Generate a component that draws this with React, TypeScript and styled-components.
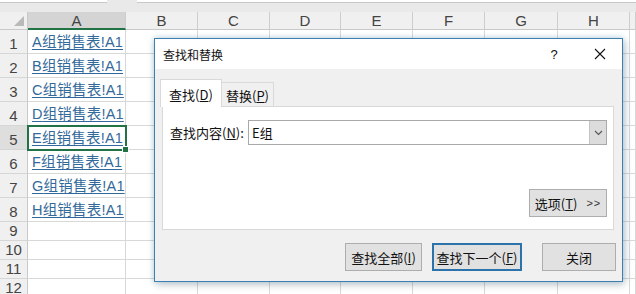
import styled, { createGlobalStyle, css } from 'styled-components';

const GlobalStyle = createGlobalStyle`
  html, body {
    margin: 0;
    padding: 0;
    background: #ffffff;
    overflow: hidden;
  }
  body {
    font-family: "Liberation Sans", "Noto Sans CJK SC", sans-serif;
  }
`;

const colWidths = [28, 98, 72, 72, 71, 72, 72, 73, 72];
const colNames = ['A', 'B', 'C', 'D', 'E', 'F', 'G', 'H'];
const links = ['A', 'B', 'C', 'D', 'E', 'F', 'G', 'H'];
const rowHeights = [24, 24, 24, 24, 24, 24, 24, 24, 19, 19, 19, 19];
const SELECTED_ROW = 5;

const Page = styled.div`
  position: relative;
  width: 636px;
  height: 294px;
  overflow: hidden;
  background: #fff;
`;

const TopStrip = styled.div`
  height: 12px;
  background: #e9e9e9;
  display: flex;
  align-items: flex-start;
  gap: 30px;
`;

const StripBox = styled.div<{ $w: string }>`
  width: ${(p) => p.$w};
  height: 2px;
  background: #fff;
  border-bottom: 1px solid #c8c8c8;
`;

const Grid = styled.div`
  display: grid;
  grid-template-columns: ${colWidths.map((w) => `${w}px`).join(' ')} 1fr;
  grid-template-rows: 18px ${rowHeights.map((h) => `${h}px`).join(' ')};
`;

const Corner = styled.div`
  background: #f0f0f0;
  border-right: 1px solid #c9c9c9;
  border-bottom: 1px solid #c9c9c9;
  box-sizing: border-box;
  display: flex;
  align-items: flex-end;
  justify-content: flex-end;
  padding: 0 3px 3px 0;
`;

const SelectAll = styled.div`
  width: 0;
  height: 0;
  border-left: 10px solid transparent;
  border-bottom: 10px solid #b9b9b9;
`;

const ColHeader = styled.div<{ $active?: boolean }>`
  box-sizing: border-box;
  background: ${(p) => (p.$active ? '#d4d4d4' : '#f0f0f0')};
  border-right: 1px solid #cdcdcd;
  border-bottom: ${(p) => (p.$active ? '2px solid #217346' : '1px solid #c9c9c9')};
  color: #444;
  font-size: 15px;
  display: flex;
  align-items: center;
  justify-content: center;
  line-height: 1;
`;

const RowHeader = styled.div<{ $active?: boolean }>`
  box-sizing: border-box;
  background: ${(p) => (p.$active ? '#dedede' : '#f0f0f0')};
  border-right: 1px solid #c9c9c9;
  border-bottom: 1px solid #d6d6d6;
  color: #444;
  font-size: 15px;
  display: flex;
  align-items: flex-end;
  justify-content: center;
  padding-bottom: 2px;
  line-height: 1;
`;

const Cell = styled.div<{ $selected?: boolean }>`
  position: relative;
  box-sizing: border-box;
  border-right: 1px solid #d8d8d8;
  border-bottom: 1px solid #d8d8d8;
  display: flex;
  align-items: flex-end;
  padding: 0 0 4px 4px;
  ${(p) =>
    p.$selected &&
    css`
      outline: 2px solid #217346;
      outline-offset: -1px;
      z-index: 1;
    `}
`;

const FillHandle = styled.span`
  position: absolute;
  right: -4px;
  bottom: -4px;
  width: 5px;
  height: 5px;
  background: #217346;
  border: 1px solid #fff;
`;

const Link = styled.span`
  color: #33699a;
  text-decoration: underline;
  text-underline-offset: 2px;
  font-size: 14.5px;
  line-height: 1;
  white-space: nowrap;
  letter-spacing: 0.2px;
`;

// ---- dialog ----

const Dialog = styled.div`
  position: absolute;
  left: 154px;
  top: 38px;
  width: 469px;
  height: 244px;
  box-sizing: border-box;
  border: 1px solid #3f7fae;
  background: #f0f0f0;
  box-shadow: 0 0 6px rgba(60, 150, 200, 0.35), 2px 3px 8px rgba(0, 0, 0, 0.18);
  display: flex;
  flex-direction: column;
  font-family: "Noto Sans CJK SC", sans-serif;
  color: #111;
  z-index: 5;
`;

const TitleBar = styled.div`
  height: 30px;
  background: #fff;
  display: flex;
  align-items: center;
  padding-left: 8px;
`;

const Title = styled.div`
  font-size: 12px;
  flex: 1;
`;

const TitleButton = styled.div<{ $w: number; $mr?: number }>`
  width: ${(p) => p.$w}px;
  margin-right: ${(p) => p.$mr ?? 0}px;
  height: 30px;
  display: flex;
  align-items: center;
  justify-content: center;
  font-family: "Liberation Sans", sans-serif;
  font-size: 13px;
`;

const Body = styled.div`
  flex: 1;
  display: flex;
  flex-direction: column;
  padding: 10px 8px 0 7px;
`;

const TabStrip = styled.div`
  display: flex;
  align-items: flex-end;
  margin-left: -2px;
  height: 27px;
`;

const Tab = styled.div<{ $active?: boolean }>`
  box-sizing: border-box;
  display: flex;
  align-items: center;
  justify-content: center;
  font-size: 13px;
  line-height: 1;
  border: 1px solid #d9d9d9;
  ${(p) =>
    p.$active
      ? css`
          width: 62px;
          height: 28px;
          background: #fff;
          border-bottom: none;
          margin-bottom: -1px;
          position: relative;
          z-index: 1;
          padding-top: 1px;
        `
      : css`
          width: 52px;
          height: 24px;
          background: #f0f0f0;
          border-left: none;
          border-bottom: none;
          padding-top: 2px;
        `}
`;

const Panel = styled.div`
  height: 124px;
  box-sizing: border-box;
  background: #fff;
  border: 1px solid #d9d9d9;
  display: flex;
  flex-direction: column;
  justify-content: space-between;
  align-items: flex-end;
  padding: 13px 6px 12px 7px;
`;

const FieldRow = styled.div`
  align-self: stretch;
  display: flex;
  align-items: center;
`;

const Label = styled.label`
  width: 78px;
  font-size: 13px;
  line-height: 1;
`;

const ComboBox = styled.div`
  flex: 1;
  height: 25px;
  box-sizing: border-box;
  border: 1px solid #a9a9a9;
  display: flex;
  align-items: stretch;
`;

const ComboText = styled.div`
  flex: 1;
  font-size: 13px;
  display: flex;
  align-items: center;
  padding-left: 3px;
`;

const ComboArrow = styled.div`
  width: 16px;
  background: #dcdcdc;
  border-left: 1px solid #c4c4c4;
  display: flex;
  align-items: center;
  justify-content: center;
`;

const Footer = styled.div`
  display: flex;
  justify-content: flex-end;
  margin: 13px -2px 0 0;
`;

const Button = styled.button<{ $w: number; $focus?: boolean; $gap?: number }>`
  width: ${(p) => p.$w}px;
  height: 28px;
  margin-left: ${(p) => p.$gap ?? 0}px;
  box-sizing: border-box;
  background: #e1e1e1;
  border: ${(p) => (p.$focus ? '2px solid #2c73ac' : '1px solid #adadad')};
  font-family: "Noto Sans CJK SC", sans-serif;
  font-size: 13px;
  color: #111;
  padding: 0;
  display: flex;
  align-items: center;
  justify-content: center;
  line-height: 1;
`;

const Chevrons = styled.span`
  font-family: "Liberation Sans", sans-serif;
  font-size: 11px;
  margin-left: 9px;
  letter-spacing: 1px;
  color: #333;
`;

const CloseIcon = () => (
  <svg width="12" height="12" viewBox="0 0 12 12">
    <path d="M1 1 L11 11 M11 1 L1 11" stroke="#111" strokeWidth="1.1" fill="none" />
  </svg>
);

const ArrowIcon = () => (
  <svg width="9" height="6" viewBox="0 0 9 6">
    <path d="M1 1 L4.5 4.5 L8 1" stroke="#555" strokeWidth="1.1" fill="none" />
  </svg>
);

const App = () => {
  const rows = rowHeights.map((_, i) => i + 1);
  return (
    <Page>
      <GlobalStyle />
      <TopStrip>
        <StripBox $w="107px" />
        <StripBox $w="499px" />
      </TopStrip>
      <Grid>
        <Corner>
          <SelectAll />
        </Corner>
        {colNames.map((c) => (
          <ColHeader key={c} $active={c === 'A'}>
            {c}
          </ColHeader>
        ))}
        <ColHeader />
        {rows.map((r) => (
          <>
            <RowHeader key={`h${r}`} $active={r === SELECTED_ROW}>
              {r}
            </RowHeader>
            <Cell key={`a${r}`} $selected={r === SELECTED_ROW}>
              {r <= links.length && <Link>{links[r - 1]}组销售表!A1</Link>}
              {r === SELECTED_ROW && <FillHandle />}
            </Cell>
            {colNames.slice(1).map((c) => (
              <Cell key={`${c}${r}`} />
            ))}
            <Cell key={`z${r}`} />
          </>
        ))}
      </Grid>

      <Dialog>
        <TitleBar>
          <Title>查找和替换</Title>
          <TitleButton $w={30} $mr={9}>?</TitleButton>
          <TitleButton $w={44}>
            <CloseIcon />
          </TitleButton>
        </TitleBar>
        <Body>
          <TabStrip>
            <Tab $active>
              查找(<u>D</u>)
            </Tab>
            <Tab>
              替换(<u>P</u>)
            </Tab>
          </TabStrip>
          <Panel>
            <FieldRow>
              <Label>
                查找内容(<u>N</u>):
              </Label>
              <ComboBox>
                <ComboText>E组</ComboText>
                <ComboArrow>
                  <ArrowIcon />
                </ComboArrow>
              </ComboBox>
            </FieldRow>
            <Button $w={78}>
              选项(<u>T</u>)<Chevrons>&gt;&gt;</Chevrons>
            </Button>
          </Panel>
          <Footer>
            <Button $w={77}>
              查找全部(<u>I</u>)
            </Button>
            <Button $w={90} $gap={10} $focus>
              查找下一个(<u>F</u>)
            </Button>
            <Button $w={74} $gap={20}>
              关闭
            </Button>
          </Footer>
        </Body>
      </Dialog>
    </Page>
  );
};

export default App;
